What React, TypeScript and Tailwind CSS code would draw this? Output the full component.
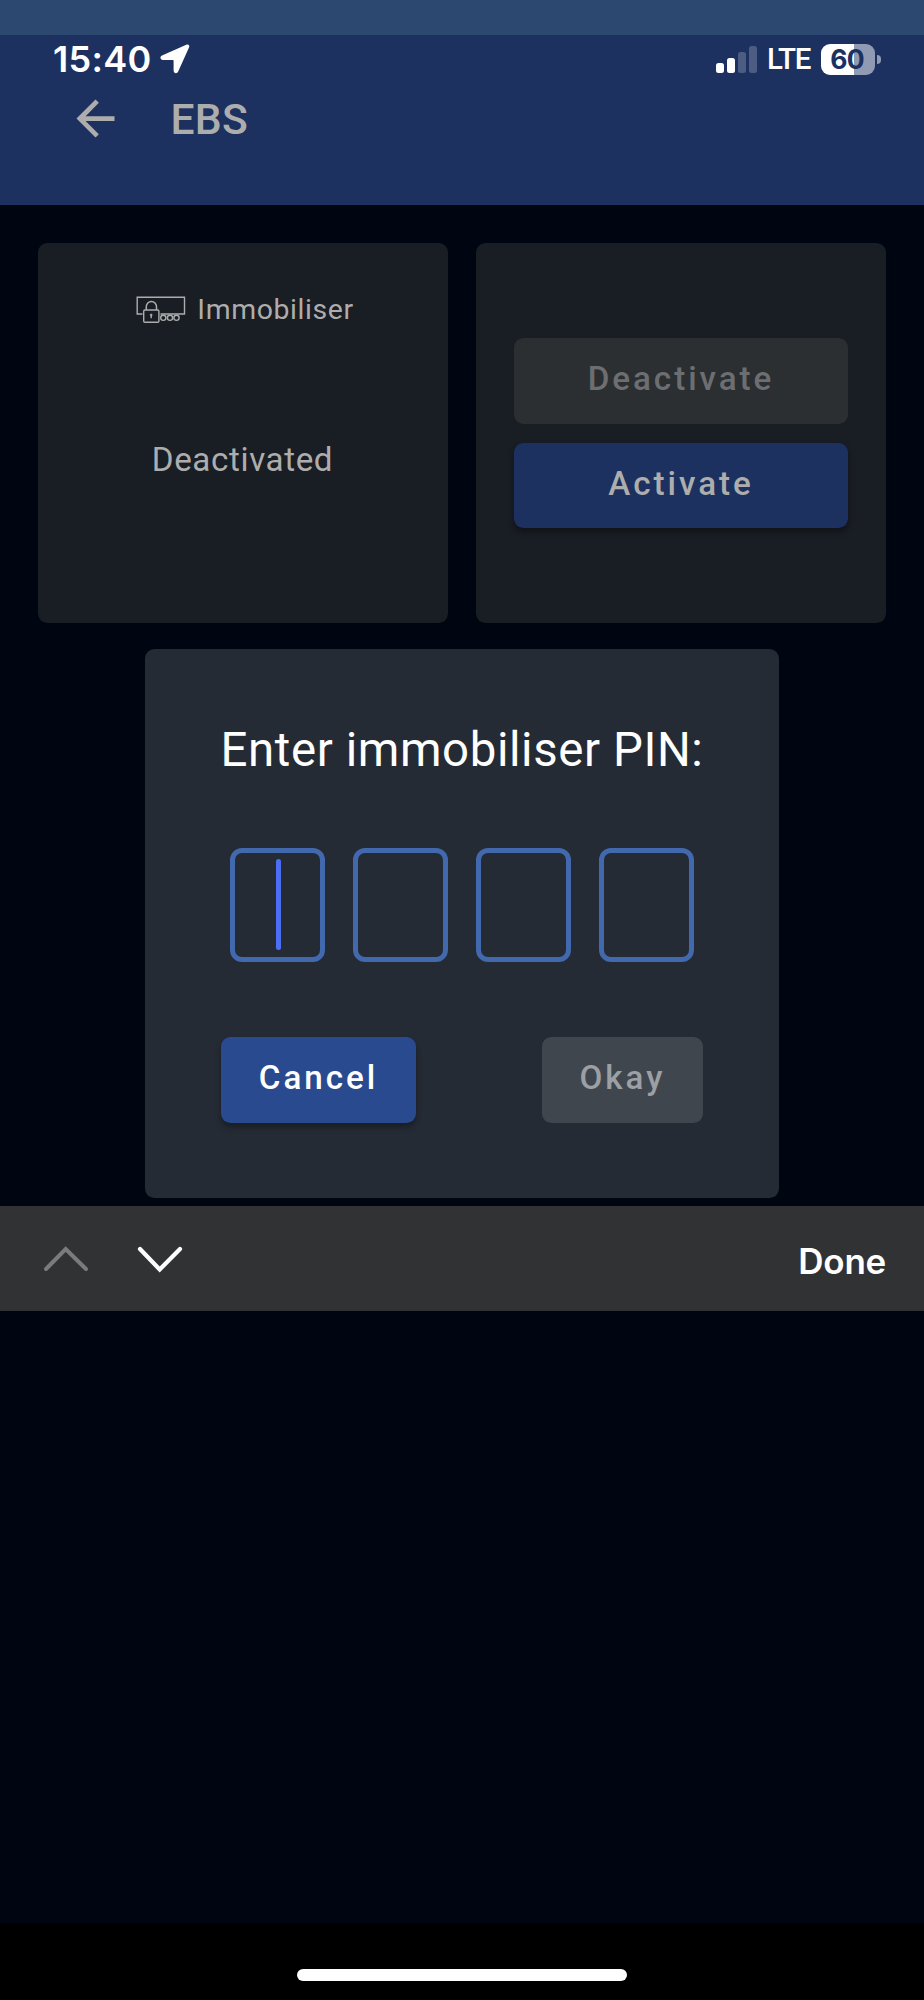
import React, { useState } from 'react';
import { clsx } from 'clsx';

const PIN_LENGTH = 4;

const signalBars = [
  { height: 'h-[10px]', on: true },
  { height: 'h-[15px]', on: true },
  { height: 'h-[21px]', on: false },
  { height: 'h-[27px]', on: false },
];

function LocationIcon() {
  return (
    <svg width="30" height="30" viewBox="0 0 30 30" fill="#fff">
      <path d="M26.3.7 2 11.6c-2.6 1.2-1.7 4.4 1 4.4h9.6c.7 0 1 .3 1 1v9.6c0 2.9 3.4 3.6 4.6 1L29 3.6C29.9 1.3 28.4-.2 26.3.7Z" />
    </svg>
  );
}

function BackIcon() {
  return (
    <svg width="57" height="57" viewBox="0 0 24 24" fill="#adadad">
      <path d="M20 11H7.83l5.59-5.59L12 4l-8 8 8 8 1.41-1.41L7.83 13H20v-2z" />
    </svg>
  );
}

function TrailerLockIcon() {
  return (
    <svg width="50" height="28" viewBox="0 0 50 28" fill="none" stroke="#adadad" strokeWidth="1.4">
      <path d="M6.5 18H1.2V1.2h47.3V18H24.5" />
      <path d="M10.3 14v-3.3a5.1 5.1 0 0 1 10.2 0V14" strokeWidth="1.5" />
      <rect x="7.7" y="14" width="15.2" height="12.3" rx="1.2" />
      <circle cx="15.2" cy="18.9" r="1" fill="#adadad" strokeWidth="0.6" />
      <path d="M15.2 19v3.2" />
      <circle cx="27.3" cy="21.8" r="2.6" />
      <circle cx="34" cy="21.8" r="2.6" />
      <circle cx="40.5" cy="21.8" r="2.6" />
    </svg>
  );
}

function StatusBar() {
  return (
    <div className="flex h-12 items-center pl-[53px] pr-[43px] font-['Inter',sans-serif] text-white">
      <span className="w-[98px] whitespace-nowrap text-[36px] font-semibold leading-none tracking-[0.3px]">
        15:40
      </span>
      <span className="ml-[9px]">
        <LocationIcon />
      </span>
      <div className="ml-auto flex h-[27px] items-end gap-[3px]">
        {signalBars.map((bar) => (
          <span
            key={bar.height}
            className={clsx('w-2 rounded-[2.5px]', bar.height, bar.on ? 'bg-white' : 'bg-[#4c5c82]')}
          />
        ))}
      </div>
      <span className="ml-[10px] mt-[2px] w-[43px] whitespace-nowrap font-['Roboto',sans-serif] text-[29.5px] font-medium leading-none tracking-[-1.3px]">
        LTE
      </span>
      <div className="ml-[11px] flex h-[31px] w-[54px] items-center justify-center rounded-[9px] bg-linear-to-r from-white from-[61%] to-[#919ab3] to-[61%] pr-[2px] text-[26.5px] font-bold leading-none tracking-[-0.8px] text-[#1c3160]">
        60
      </div>
      <span className="ml-[2px] h-[9px] w-1 rounded-r-full bg-[#919ab3]" />
    </div>
  );
}

function Header({ title }: { title: string }) {
  return (
    <header className="h-[205px] bg-[#1c3160]">
      <div className="h-[35px] bg-[#2c4770]" />
      <StatusBar />
      <div className="flex h-[70px] items-center pl-[66.5px]">
        <button type="button">
          <BackIcon />
        </button>
        <h1 className="ml-[47px] mt-[3px] text-[42.6px] font-medium leading-none tracking-[0.3px] text-[#adadad]">
          {title}
        </h1>
      </div>
    </header>
  );
}

function Button({
  children,
  className,
  disabled,
}: {
  children: React.ReactNode;
  className: string;
  disabled?: boolean;
}) {
  return (
    <button
      type="button"
      disabled={disabled}
      className={clsx(
        'flex h-[85.5px] items-center justify-center rounded-[9.5px] pb-1 text-[33.2px] font-medium leading-none tracking-[2.96px]',
        !disabled && 'shadow-[0_4px_6px_rgba(0,0,0,0.35)]',
        className,
      )}
    >
      {children}
    </button>
  );
}

function PinDialog() {
  const [active] = useState(0);

  return (
    <section className="mx-auto mt-[26px] h-[549.5px] w-[634px] rounded-[9.5px] bg-[#252b35] px-[76px] pt-[71px]">
      <h2 className="-mx-4 whitespace-nowrap text-center text-[47.4px] leading-[60px] tracking-[0.59px] text-white">
        Enter immobiliser PIN:
      </h2>
      <div className="mt-[68px] flex justify-center gap-[28.2px]">
        {Array.from({ length: PIN_LENGTH }, (_, idx) => (
          <div
            key={idx}
            className="flex h-[114px] w-[95px] items-center justify-center rounded-[12px] border-[5px] border-[#4268ae]"
          >
            {idx === active && <span className="ml-[2px] h-[91px] w-[5px] rounded-full bg-[#4a6ff5]" />}
          </div>
        ))}
      </div>
      <div className="mt-[75.5px] flex justify-between">
        <Button className="w-[195px] bg-[#2a4a8f] text-white">Cancel</Button>
        <Button className="w-[161px] bg-[#40464e] text-[#9c9fa4]" disabled>
          Okay
        </Button>
      </div>
    </section>
  );
}

function KeyboardToolbar() {
  return (
    <div className="flex h-[105px] items-center bg-[#313234] pl-[42px] pr-[38px]">
      <svg className="mt-[2px]" width="48" height="28" viewBox="0 0 48 28" fill="none" stroke="#7b7b7d" strokeWidth="4" strokeLinecap="round">
        <path d="M4 24 23.7 4 44 24" />
      </svg>
      <svg className="ml-[46px] mt-[2px]" width="48" height="28" viewBox="0 0 48 28" fill="none" stroke="#fff" strokeWidth="4.2" strokeLinecap="round">
        <path d="M4 4 23.7 24.5 44 4" />
      </svg>
      <button
        type="button"
        className="ml-auto mt-[6px] font-['Inter',sans-serif] text-[35px] font-semibold leading-none tracking-[-0.25px] text-white"
      >
        Done
      </button>
    </div>
  );
}

export default function App() {
  return (
    <div className="flex h-[2000px] w-[924px] flex-col overflow-hidden bg-[#000611] font-['Roboto',sans-serif]">
      <Header title="EBS" />
      <main className="h-[1000.5px] px-[38px] pt-[38px]">
        <div className="grid grid-cols-2 gap-7">
          <section className="h-[379.5px] rounded-[9.5px] bg-[#191d24] pt-12 text-[#adadad]">
            <div className="flex h-[38px] items-center justify-center gap-[11px] pl-1">
              <TrailerLockIcon />
              <h2 className="text-[28.4px] leading-none tracking-[0.6px]">Immobiliser</h2>
            </div>
            <p className="mt-[111px] pr-px text-center text-[33.2px] leading-10 tracking-[0.6px]">
              Deactivated
            </p>
          </section>
          <section className="flex h-[379.5px] flex-col gap-[19px] rounded-[9.5px] bg-[#191d24] px-[38px] pt-[95px]">
            <Button className="bg-[#2b2f32] text-[#6d6e71]" disabled>
              Deactivate
            </Button>
            <Button className="bg-[#1c3160] text-[#adadad]">Activate</Button>
          </section>
        </div>
        <PinDialog />
      </main>
      <KeyboardToolbar />
      <footer className="mt-auto flex h-[77px] justify-center bg-black pt-[45.5px]">
        <span className="h-[12.5px] w-[330px] rounded-full bg-white" />
      </footer>
    </div>
  );
}
